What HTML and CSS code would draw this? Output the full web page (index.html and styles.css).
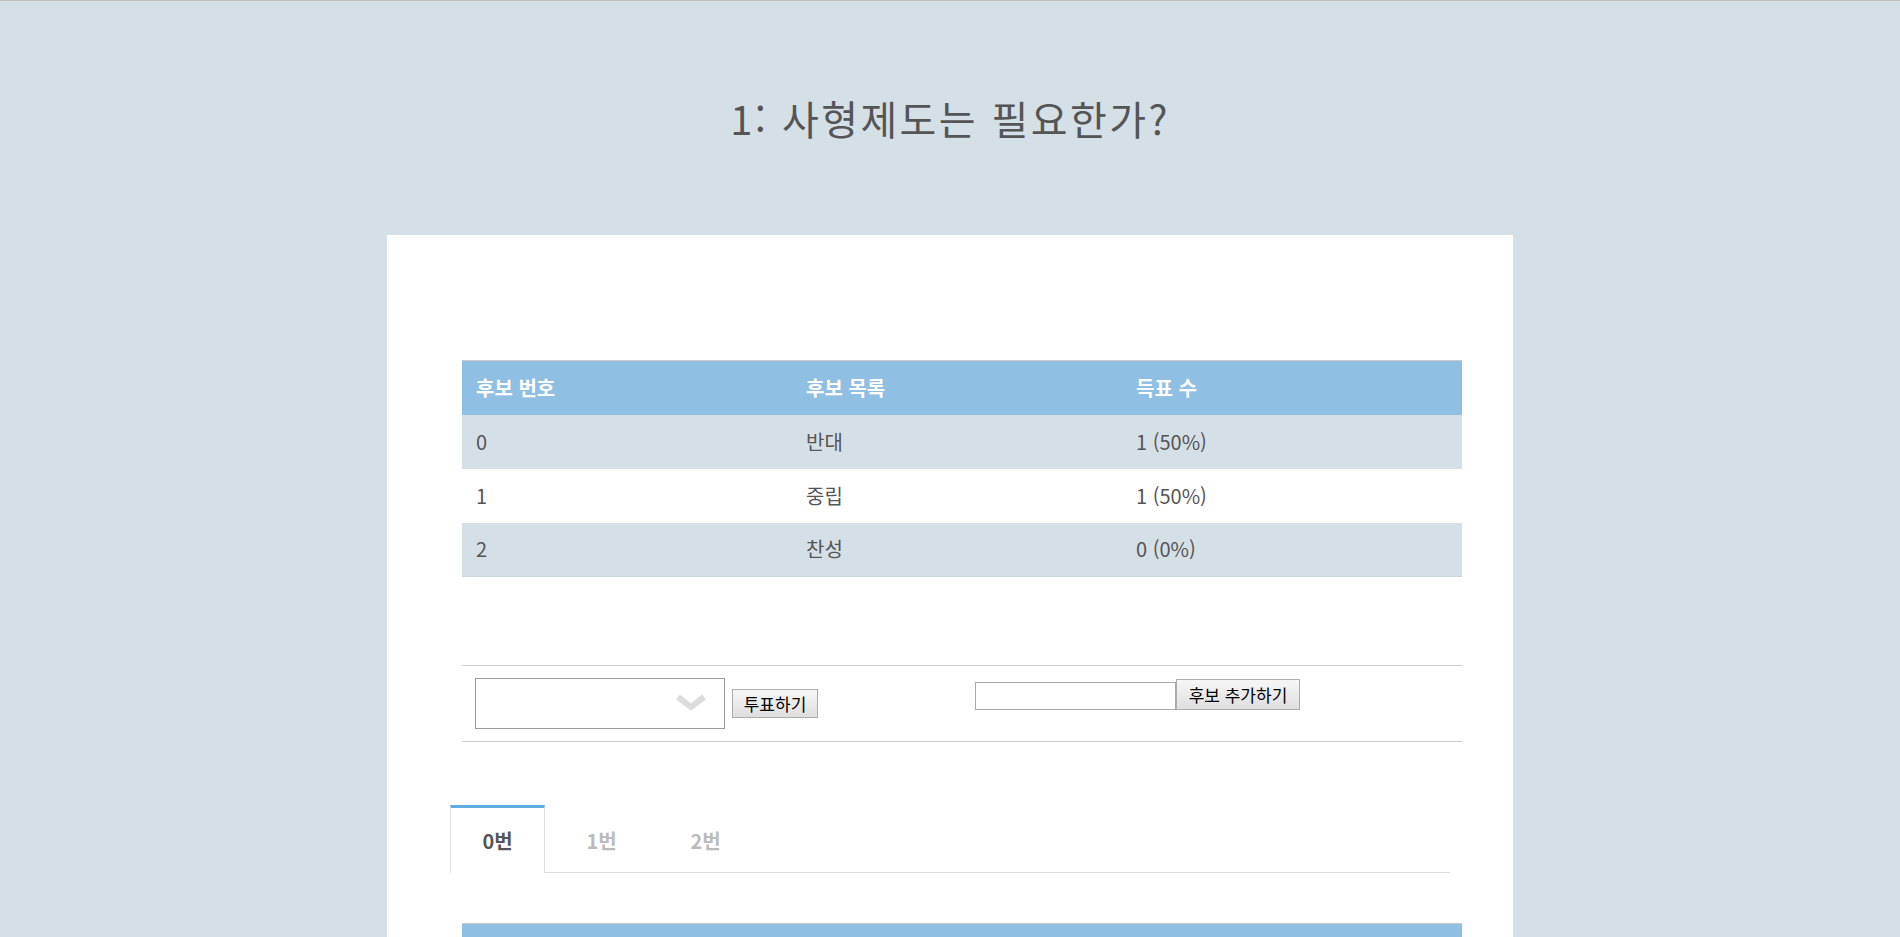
FILE: index.html
```html
<!DOCTYPE html>
<html lang="ko">
<head>
<meta charset="utf-8">
<title>1: 사형제도는 필요한가?</title>
<link rel="stylesheet" href="styles.css">
</head>
<body>
<header class="page-head">
  <h1 class="title">1: 사형제도는 필요한가?</h1>
</header>
<main class="card">
  <table class="results">
    <thead>
      <tr><th class="col-a">후보 번호</th><th class="col-b">후보 목록</th><th>득표 수</th></tr>
    </thead>
    <tbody>
      <tr class="odd"><td>0</td><td>반대</td><td>1 (50%)</td></tr>
      <tr><td>1</td><td>중립</td><td>1 (50%)</td></tr>
      <tr class="odd"><td>2</td><td>찬성</td><td>0 (0%)</td></tr>
    </tbody>
  </table>

  <div class="vote">
    <div class="vote-cell vote-left">
      <div class="select-wrap">
        <select class="select" aria-label="후보 선택"></select>
        <svg class="chevron" width="30" height="18" viewBox="0 0 30 18"><polyline points="2,3 15,13 28,3" fill="none" stroke="#dcdcdc" stroke-width="6"/></svg>
      </div>
      <button class="btn btn-vote">투표하기</button>
    </div>
    <div class="vote-cell vote-right">
      <input class="text-input" type="text" aria-label="후보 이름">
      <button class="btn btn-add">후보 추가하기</button>
    </div>
  </div>

  <nav class="tabs">
    <div class="tab active">0번</div>
    <div class="tab">1번</div>
    <div class="tab">2번</div>
  </nav>

  <table class="results">
    <thead>
      <tr><th class="col-a">&nbsp;</th><th class="col-b"></th><th></th></tr>
    </thead>
  </table>
</main>
</body>
</html>
```
FILE: styles.css
```css
* { box-sizing: border-box; }
html, body { margin: 0; padding: 0; }
body {
  background: #d5dfe6;
  border-top: 1px solid #bdbdbd;
  font-family: "Noto Sans CJK KR", "Noto Sans", sans-serif;
  color: #555;
  height: 937px;
  overflow: hidden;
}
.page-head {
  padding: 93px 0 93px;
}
.title {
  margin: 0;
  font-size: 40px;
  line-height: 48px;
  letter-spacing: 2.4px;
  font-weight: 400;
  text-align: center;
  color: #555;
}
.card {
  width: 1126px;
  margin: 0 auto;
  background: #fff;
  padding: 125px 50px 0 75px;
  min-height: 800px;
}
.results {
  width: 1000px;
  border-collapse: collapse;
  border-top: 1px solid #c8c8c8;
  border-bottom: 1px solid #cfd4d8;
  font-size: 20px;
}
.results th, .results td {
  text-align: left;
  padding: 0 14px;
  height: 54px;
  line-height: 30px;
}
.results th {
  background: #8fbfe2;
  color: #fff;
  font-weight: 700;
}
.results td { color: #555; }
.results .odd td { background: #d5dfe6; }
.col-a, .col-b { width: 330px; }

.vote {
  margin-top: 88px;
  width: 1000px;
  border-top: 1px solid #cccccc;
  border-bottom: 1px solid #cccccc;
  display: grid;
  grid-template-columns: 500px 500px;
}
.vote-cell {
  padding: 12px 13px;
  display: flex;
}
.vote-left { align-items: center; gap: 7px; }
.vote-right { align-items: flex-end; align-self: start; padding-top: 13px; }
.select-wrap {
  position: relative;
  width: 250px;
  height: 51px;
}
.select {
  appearance: none;
  -webkit-appearance: none;
  width: 100%;
  height: 100%;
  border: 1px solid #9a9a9a;
  background: #fff;
  border-radius: 0;
  margin: 0;
}
.chevron {
  position: absolute;
  right: 19px;
  top: 16px;
}
.btn {
  font-family: "Noto Sans CJK KR", "Noto Sans", sans-serif;
  font-size: 17px;
  color: #000;
  background: linear-gradient(#f7f7f7, #dedede);
  border: 1px solid #adadad;
  border-radius: 0;
  padding: 0 6px;
  margin: 0;
  line-height: 1;
}
.btn-vote { height: 29px; width: 86px; }
.btn-add { height: 31px; width: 124px; }
.text-input {
  width: 201px;
  height: 28px;
  border: 1px solid #a9a9a9;
  margin: 0;
  padding: 0 4px;
}

.tabs {
  margin: 63px 0 0 -12px;
  width: 1000px;
  display: flex;
  gap: 9px;
  border-bottom: 1px solid #dddddd;
  height: 68px;
}
.tab {
  width: 95px;
  height: 68px;
  margin-bottom: -1px;
  border: 1px solid transparent;
  border-top: 3px solid transparent;
  border-bottom: 0;
  display: flex;
  align-items: center;
  justify-content: center;
  font-size: 20px;
  font-weight: 700;
  color: #bbbbbb;
}
.tab.active {
  border-color: #dddddd;
  border-top-color: #5dade2;
  background: #fff;
  color: #555;
}
.tabs + .results { margin-top: 50px; }
```
